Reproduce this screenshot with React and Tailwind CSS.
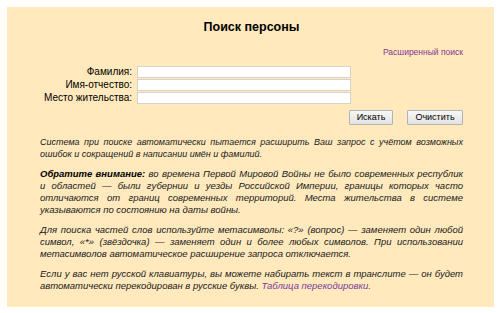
export default function App() {
  const font = { fontFamily: '"Liberation Sans", Arial, sans-serif' }

  const fields = ['Фамилия:', 'Имя-отчество:', 'Место жительства:']

  return (
    <div className="w-[500px] h-[313px] bg-white pt-[7px] pl-[7px]" style={font}>
      <div className="w-[487px] h-[300px] bg-[#ffe9bd] pl-[33px] pr-[31px] pt-[13px] text-[#1a1a1a]">
        {/* Title */}
        <h1 className="text-center text-[12.5px] leading-[15px] font-bold text-black">Поиск персоны</h1>

        <div className="mt-[12px] flex justify-end">
          <a className="text-[8.5px] leading-[10px] text-[#8a3592] cursor-pointer">Расширенный поиск</a>
        </div>

        {/* Form */}
        <div className="mt-[9px] flex flex-col gap-[1px]">
          {fields.map(label => (
            <div key={label} className="flex items-center h-[12px]">
              <label className="w-[92px] text-right text-[10px] leading-[12px] text-black">{label}</label>
              <input
                type="text"
                className="ml-[5px] w-[214px] h-[12px] bg-white border border-[#d6d3cc] outline-none"
              />
            </div>
          ))}
        </div>

        <div className="mt-[6px] flex justify-end gap-[14px]">
          <button className="w-[44px] h-[15px] text-[9px] leading-[13px] text-black bg-gradient-to-b from-[#f7f7f7] to-[#e2e2e2] border border-[#b3b3b3] rounded-[1px]">
            Искать
          </button>
          <button className="w-[56px] h-[15px] text-[9px] leading-[13px] text-black bg-gradient-to-b from-[#f7f7f7] to-[#e2e2e2] border border-[#b3b3b3] rounded-[1px]">
            Очистить
          </button>
        </div>

        {/* Help text */}
        <div className="mt-[11px] flex flex-col gap-[8px] text-[9.5px] leading-[12px] italic text-justify">
          <p className="text-[9px]">
            Система при поиске автоматически пытается расширить Ваш запрос с учётом возможных ошибок и сокращений в написании имён и фамилий.
          </p>
          <p>
            <b className="text-black">Обратите внимание:</b> во времена Первой Мировой Войны не было современных республик и областей — были губернии и уезды Российской Империи, границы которых часто отличаются от границ современных территорий. Места жительства в системе указываются по состоянию на даты войны.
          </p>
          <p>
            Для поиска частей слов используйте метасимволы: «?» (вопрос) — заменяет один любой символ, «*» (звёздочка) — заменяет один и более любых символов. При использовании метасимволов автоматическое расширение запроса отключается.
          </p>
          <p>
            Если у вас нет русской клавиатуры, вы можете набирать текст в транслите — он будет автоматически перекодирован в русские буквы.{' '}
            <a className="text-[#7b3a98] cursor-pointer">Таблица перекодировки.</a>
          </p>
        </div>
      </div>
    </div>
  )
}
